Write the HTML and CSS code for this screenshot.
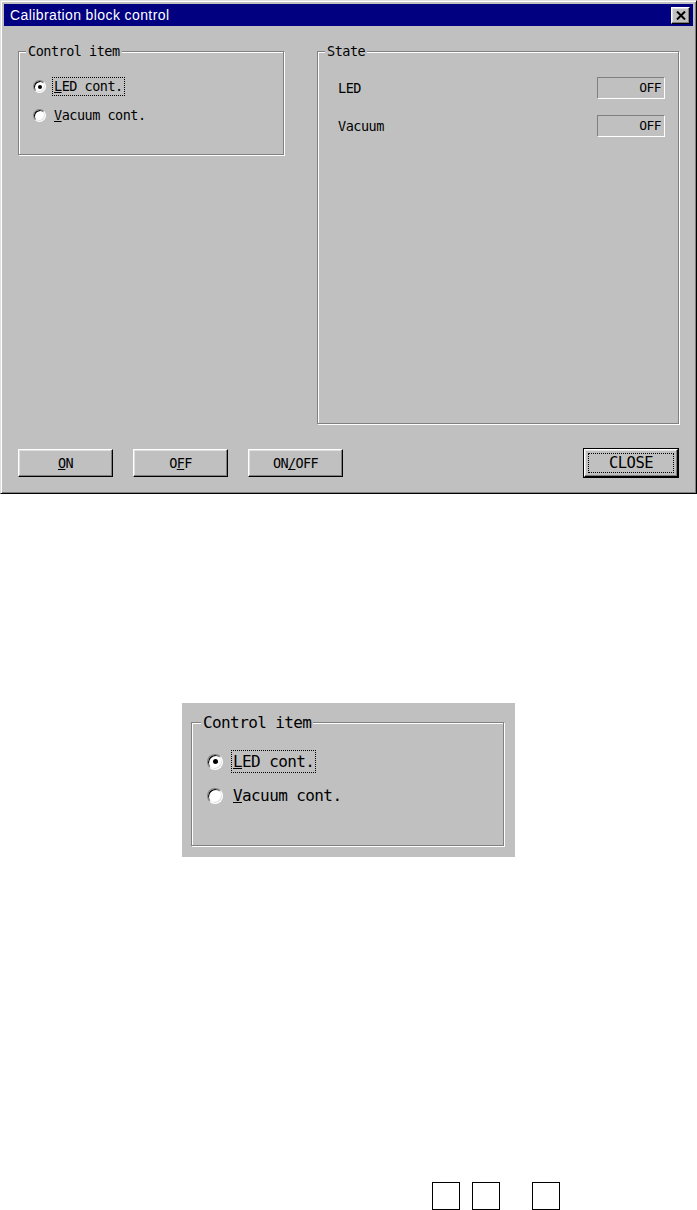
FILE: index.html
```html
<!DOCTYPE html>
<html>
<head>
	<title>Calibration block control</title>
	<link rel="stylesheet" href="styles.css">
</head>
<body>
	<div class="window">
		<div class="titlebar">
			<span class="title">Calibration block control</span>
			<span class="close-btn">
				<svg width="10" height="9" viewBox="0 0 10 9"><path d="M1 0.5 L9 8.5 M9 0.5 L1 8.5" stroke="#000" stroke-width="2"/></svg>
			</span>
		</div>
		<div class="client">
			<div class="groups">
				<fieldset class="group">
					<legend>Control item</legend>
					<div class="radio-list">
						<div class="radio-row"><span class="radio checked"></span><span class="radio-label focused"><u>L</u>ED cont.</span></div>
						<div class="radio-row"><span class="radio"></span><span class="radio-label"><u>V</u>acuum cont.</span></div>
					</div>
				</fieldset>
				<fieldset class="group state-group">
					<legend>State</legend>
					<div class="state-list">
						<div class="state-row"><span>LED</span><span class="state-value">OFF</span></div>
						<div class="state-row"><span>Vacuum</span><span class="state-value">OFF</span></div>
					</div>
				</fieldset>
			</div>
			<div class="button-row">
				<button class="btn"><u>O</u>N</button>
				<button class="btn">O<u>F</u>F</button>
				<button class="btn">ON<u>/</u>OFF</button>
				<button class="btn default"><span class="focus">CLOSE</span></button>
			</div>
		</div>
	</div>

	<div class="zoom-panel">
		<fieldset class="group">
			<legend>Control item</legend>
			<div class="radio-list">
				<div class="radio-row"><span class="radio checked"></span><span class="radio-label focused"><u>L</u>ED cont.</span></div>
				<div class="radio-row"><span class="radio"></span><span class="radio-label"><u>V</u>acuum cont.</span></div>
			</div>
		</fieldset>
	</div>

	<div class="boxes">
		<span class="box"></span>
		<span class="box"></span>
		<span class="box far"></span>
	</div>
</body>
</html>
```
FILE: styles.css
```css
body {
	margin: 0;
	background: #fff;
	font-family: "DejaVu Sans Mono", monospace;
	font-size: 13.5px;
	letter-spacing: -0.5px;
	color: #000;
}

.window {
	width: 697px;
	box-sizing: border-box;
	background: #c0c0c0;
	border: 1px solid;
	border-color: #dfdfdf #000 #000 #dfdfdf;
	box-shadow: inset 1px 1px 0 #fff, inset -1px -1px 0 #808080;
	padding: 3px;
}

.titlebar {
	height: 22px;
	background: #000080;
	display: flex;
	align-items: center;
	padding: 0 3px 0 6px;
}
.title {
	flex: 1;
	color: #fff;
	font-family: "Liberation Sans", Arial, sans-serif;
	font-size: 14px;
	letter-spacing: 0.4px;
}
.close-btn {
	width: 19px;
	height: 17px;
	box-sizing: border-box;
	background: #c0c0c0;
	border: 1px solid;
	border-color: #fff #000 #000 #fff;
	box-shadow: inset -1px -1px 0 #808080, inset 1px 1px 0 #dfdfdf;
	display: flex;
	align-items: center;
	justify-content: center;
}

.client {
	padding: 18px 14px 13px 14px;
}

.groups {
	display: grid;
	grid-template-columns: 266px 362px;
	column-gap: 33px;
	align-items: start;
	height: 380px;
}

.group {
	margin: 0;
	padding: 0;
	min-width: 0;
	border: 1px solid #808080;
	box-shadow: 1px 1px 0 #fff, inset 1px 1px 0 #fff;
}
.group legend {
	margin-left: 7px;
	padding: 0 2px;
	line-height: 14px;
	background: #c0c0c0;
}
.state-group {
	align-self: stretch;
}

.radio-list {
	display: flex;
	flex-direction: column;
	gap: 10px;
	padding: 19px 0 29px 14px;
}
.radio-row {
	display: flex;
	align-items: center;
	gap: 6px;
}
.radio {
	width: 13px;
	height: 13px;
	box-sizing: border-box;
	border-radius: 50%;
	background: #fff;
	border: 1px solid;
	border-color: #808080 #fff #fff #808080;
	box-shadow: inset 1px 1px 0 #000, inset -1px -1px 0 #dfdfdf;
	display: flex;
	align-items: center;
	justify-content: center;
}
.radio.checked::after {
	content: "";
	width: 4px;
	height: 4px;
	border-radius: 50%;
	background: #000;
}
.radio-label {
	border: 1px dotted transparent;
	padding: 0 1px;
	line-height: 17px;
}
.radio-label.focused {
	border-color: #000;
}

.state-list {
	display: flex;
	flex-direction: column;
	gap: 16px;
	padding: 19px 13px 0 20px;
}
.state-row {
	display: flex;
	align-items: center;
	justify-content: space-between;
}
.state-value {
	width: 68px;
	height: 22px;
	box-sizing: border-box;
	border: 1px solid;
	border-color: #808080 #fff #fff #808080;
	text-align: right;
	padding-right: 3px;
	line-height: 20px;
	font-size: 13px;
	letter-spacing: -0.6px;
}

.button-row {
	display: flex;
	gap: 20px;
	margin-top: 25px;
}
.btn {
	width: 95px;
	height: 28px;
	padding: 0;
	background: #c0c0c0;
	border: 1px solid;
	border-color: #fff #000 #000 #fff;
	box-shadow: inset -1px -1px 0 #808080, inset 1px 1px 0 #dfdfdf;
	font-family: "DejaVu Sans Mono", monospace;
	font-size: 13.5px;
	letter-spacing: -0.6px;
	color: #000;
}
.btn.default {
	width: 94px;
	margin-left: auto;
	margin-right: 1px;
	outline: 1px solid #000;
	font-size: 15.5px;
	letter-spacing: -0.5px;
}
.focus {
	display: block;
	margin: 0 3px;
	height: 20px;
	line-height: 18px;
	box-sizing: border-box;
	border: 1px dotted #000;
}

.zoom-panel {
	width: 333px;
	box-sizing: border-box;
	margin: 209px 0 0 182px;
	padding: 11px 11px 11px 9px;
	background: #c0c0c0;
	font-size: 16px;
	letter-spacing: -0.6px;
}
.zoom-panel .group legend {
	margin-left: 9px;
	line-height: 17px;
}
.zoom-panel .radio-list {
	gap: 11px;
	padding: 19px 0 38px 15px;
}
.zoom-panel .radio-row {
	gap: 8px;
}
.zoom-panel .radio {
	width: 16px;
	height: 16px;
}
.zoom-panel .radio.checked::after {
	width: 5px;
	height: 5px;
}
.zoom-panel .radio-label {
	line-height: 21px;
}

.boxes {
	display: flex;
	gap: 12px;
	margin: 325px 0 0 432px;
}
.box {
	width: 28px;
	height: 28px;
	box-sizing: border-box;
	border: 1px solid #000;
}
.box.far {
	margin-left: 20px;
}
```
